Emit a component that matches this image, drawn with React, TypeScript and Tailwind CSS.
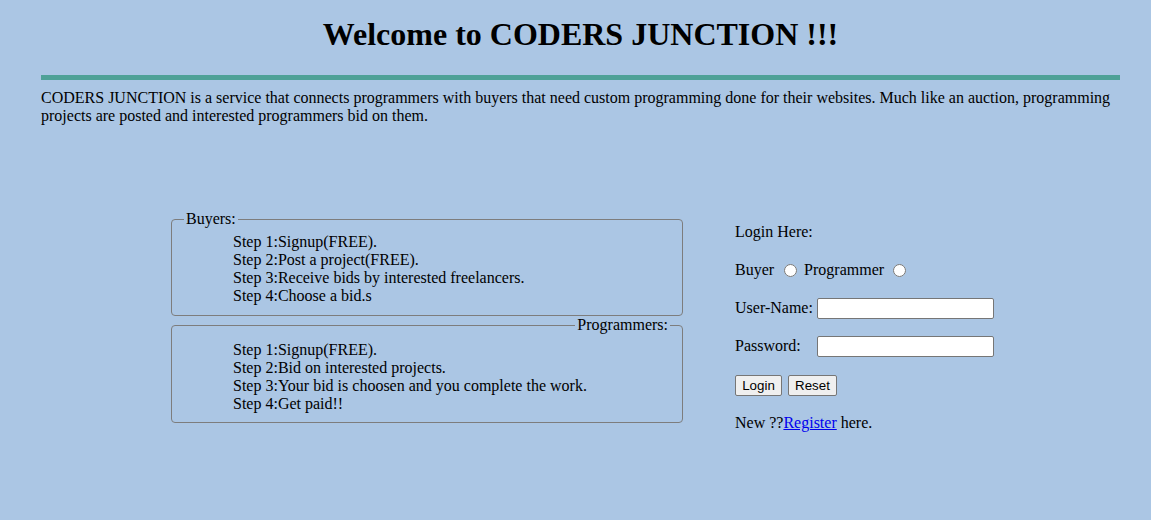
import React from "react";

const buyerSteps = [
  "Step 1:Signup(FREE).",
  "Step 2:Post a project(FREE).",
  "Step 3:Receive bids by interested freelancers.",
  "Step 4:Choose a bid.s",
];

const programmerSteps = [
  "Step 1:Signup(FREE).",
  "Step 2:Bid on interested projects.",
  "Step 3:Your bid is choosen and you complete the work.",
  "Step 4:Get paid!!",
];

const StepBox = ({
  title,
  steps,
  right,
}: {
  title: string;
  steps: string[];
  right?: boolean;
}) => (
  <fieldset
    className={`w-[512px] border border-[#7d7d7d] rounded-[4px] px-3 ${
      right ? "pt-[7px] pb-[9px]" : "pt-[5px] pb-[10px]"
    }`}
  >
    <legend className={`px-[2px] leading-[18px] ${right ? "ml-auto" : ""}`}>{title}</legend>
    <div className="pl-[49px]">
      {steps.map((s) => (
        <div key={s} className="leading-[18px]">
          {s}
        </div>
      ))}
    </div>
  </fieldset>
);

const App = () => {
  return (
    <div className="min-h-[520px] bg-[#abc6e4] pl-[41px] pr-[31px] pt-[16px] text-[16px] text-black font-['Liberation_Serif',serif]">
      <h1 className="text-center text-[32px] font-bold leading-[37px]">
        Welcome to CODERS JUNCTION !!!
      </h1>
      <hr className="mt-[22px] h-[5px] border-0 bg-[#4ea197]" />
      <p className="mt-[9px] leading-[18px]">
        CODERS JUNCTION is a service that connects programmers with buyers that need custom programming done for their
        websites. Much like an auction, programming projects are posted and interested programmers bid on them.
      </p>

      <div className="mt-[85px] ml-[130px] flex items-start">
        <div className="flex flex-col">
          <StepBox title="Buyers:" steps={buyerSteps} />
          <StepBox title="Programmers:" steps={programmerSteps} right />
        </div>

        <div className="ml-[52px] mt-[11px] flex flex-col">
          <div className="h-[22px] flex items-center">Login Here:</div>
          <div className="mt-4 h-[22px] flex items-center">
            <span>Buyer</span>
            <input type="radio" name="role" className="ml-[10px] w-[13px] h-[13px]" />
            <span className="ml-[7px]">Programmer</span>
            <input type="radio" name="role" className="ml-[9px] w-[13px] h-[13px]" />
          </div>
          <div className="mt-4 h-[22px] flex items-center">
            <span className="w-[82px]">User-Name:</span>
            <input
              type="text"
              className="w-[177px] h-[21px] bg-white border border-[#767676] rounded-[2px] px-[2px]"
            />
          </div>
          <div className="mt-4 h-[22px] flex items-center">
            <span className="w-[82px]">Password:</span>
            <input
              type="password"
              className="w-[177px] h-[21px] bg-white border border-[#767676] rounded-[2px] px-[2px]"
            />
          </div>
          <div className="mt-[17px] h-[22px] flex items-center gap-[6px]">
            <button className="h-[21px] w-[47px] bg-[#efefef] border border-[#767676] rounded-[2px] text-[13.33px] font-['Liberation_Sans',sans-serif]">
              Login
            </button>
            <button className="h-[21px] w-[49px] bg-[#efefef] border border-[#767676] rounded-[2px] text-[13.33px] font-['Liberation_Sans',sans-serif]">
              Reset
            </button>
          </div>
          <div className="mt-[16px] h-[22px] flex items-center">
            <span>
              New ??
              <a href="#" className="text-[#0000ee] underline">
                Register
              </a>{" "}
              here.
            </span>
          </div>
        </div>
      </div>
    </div>
  );
};

export default App;
